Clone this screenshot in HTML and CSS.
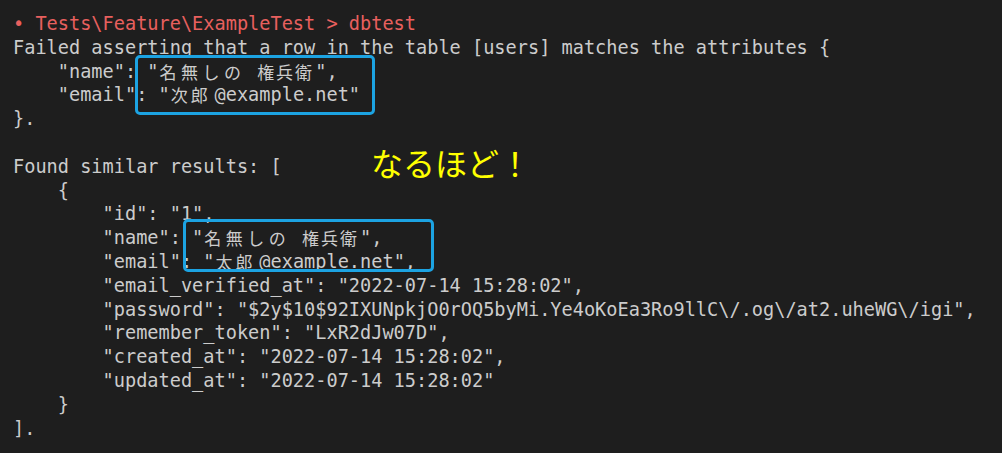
FILE: index.html
```html
<!DOCTYPE html>
<html lang="ja">
<head>
<meta charset="utf-8">
<title>dbtest</title>
<link rel="stylesheet" href="styles.css">
</head>
<body>
<div class="term">
  <div class="line red">• Tests\Feature\ExampleTest &gt; dbtest</div>
  <div class="line">Failed asserting that a row in the table [users] matches the attributes {</div>
  <div class="line">    "name": "<span class="cj c4">名無しの</span><span class="cj c3">権兵衛</span>",</div>
  <div class="line">    "email": "<span class="cj c2">次郎</span>@example.net"</div>
  <div class="line">}.</div>
  <div class="line"> </div>
  <div class="line">Found similar results: [</div>
  <div class="line">    {</div>
  <div class="line">        "id": "1",</div>
  <div class="line">        "name": "<span class="cj c4">名無しの</span><span class="cj c3">権兵衛</span>",</div>
  <div class="line">        "email": "<span class="cj c2">太郎</span>@example.net",</div>
  <div class="line">        "email_verified_at": "2022-07-14 15:28:02",</div>
  <div class="line">        "password": "$2y$10$92IXUNpkjO0rOQ5byMi.Ye4oKoEa3Ro9llC\/.og\/at2.uheWG\/igi",</div>
  <div class="line">        "remember_token": "LxR2dJw07D",</div>
  <div class="line">        "created_at": "2022-07-14 15:28:02",</div>
  <div class="line">        "updated_at": "2022-07-14 15:28:02"</div>
  <div class="line">    }</div>
  <div class="line">].</div>

  <div class="mark mark-top"></div>
  <div class="mark mark-bottom"></div>
  <div class="note">なるほど！</div>
</div>
</body>
</html>
```

FILE: styles.css
```css
html, body {
  margin: 0;
  padding: 0;
  background: #1e1e1e;
}
body {
  width: 1002px;
  height: 453px;
  overflow: hidden;
}
.term {
  position: relative;
  height: 453px;
  box-sizing: border-box;
  padding: 12px 0 0 13px;
  color: #cccccc;
  font-family: "DejaVu Sans Mono", "Liberation Mono", "Noto Sans CJK JP", monospace;
  font-size: 18.6px;
}
.line {
  height: 23.8px;
  line-height: 23.8px;
  white-space: pre;
}
.red {
  color: #e8605e;
}
.cj {
  display: inline-block;
  font-family: "Noto Sans CJK JP", sans-serif;
  font-size: 17px;
  letter-spacing: 3px;
  line-height: 23.8px;
  height: 23.8px;
  vertical-align: top;
  box-sizing: border-box;
  overflow: hidden;
}
.c4 {
  width: 89.6px;
  padding-left: 1px;
  letter-spacing: 4.5px;
}
.c3 {
  width: 67.2px;
  padding-left: 9px;
  letter-spacing: 2px;
}
.c2 {
  width: 44.8px;
  padding-left: 1px;
}
.mark {
  position: absolute;
  border: 3px solid #1ca3e2;
  border-radius: 5px;
  box-sizing: border-box;
}
.mark-top {
  left: 135px;
  top: 55px;
  width: 240px;
  height: 60px;
}
.mark-bottom {
  left: 183px;
  top: 219px;
  width: 251px;
  height: 53px;
}
.note {
  position: absolute;
  left: 371px;
  top: 146px;
  font-family: "Noto Sans CJK JP", sans-serif;
  font-size: 32px;
  line-height: 32px;
  color: #ffff00;
  white-space: nowrap;
}
```
